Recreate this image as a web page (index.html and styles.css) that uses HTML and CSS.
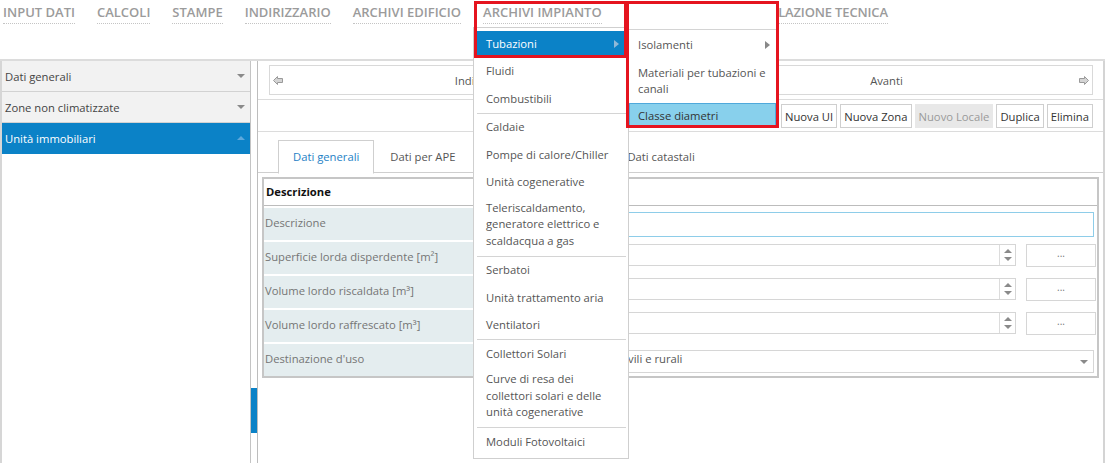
FILE: index.html
```html
<!DOCTYPE html>
<html lang="it">
<head>
<meta charset="utf-8">
<title>Unità immobiliari</title>
<link rel="stylesheet" href="styles.css">
</head>
<body>
<div class="app">
  <header class="topbar">
    <nav class="topnav">
      <a>INPUT DATI</a>
      <a>CALCOLI</a>
      <a>STAMPE</a>
      <a>INDIRIZZARIO</a>
      <a>ARCHIVI EDIFICIO</a>
      <a class="open">ARCHIVI IMPIANTO</a>
      <a>IMPOSTAZIONI</a>
      <a class="last">INSTALLAZIONE TECNICA</a>
    </nav>
  </header>

  <div class="main">
    <aside class="sidebar">
      <div class="side-item"><span>Dati generali</span><i class="caret down"></i></div>
      <div class="side-item"><span>Zone non climatizzate</span><i class="caret down"></i></div>
      <div class="side-item active"><span>Unità immobiliari</span><i class="caret up"></i></div>
    </aside>
    <div class="scrolltrack"><div class="thumb"></div></div>

    <section class="content">
      <div class="navrow">
        <div class="navbox">
          <div class="navbtn">
            <svg class="arrow" viewBox="0 0 10 9" width="10" height="9"><polygon points="0.5,4.5 4.5,0.5 4.5,2.5 9.5,2.5 9.5,6.5 4.5,6.5 4.5,8.5"/></svg>
            <span>Indietro</span>
            <i></i>
          </div>
          <div class="navbtn">
            <i></i>
            <span>Avanti</span>
            <svg class="arrow" viewBox="0 0 10 9" width="10" height="9"><polygon points="9.5,4.5 5.5,0.5 5.5,2.5 0.5,2.5 0.5,6.5 5.5,6.5 5.5,8.5"/></svg>
          </div>
        </div>
      </div>

      <div class="btnrow">
        <button class="btn">Nuova UI</button>
        <button class="btn">Nuova Zona</button>
        <button class="btn disabled">Nuovo Locale</button>
        <button class="btn">Duplica</button>
        <button class="btn">Elimina</button>
      </div>

      <div class="tabs">
        <div class="tab active">Dati generali</div>
        <div class="tab">Dati per APE</div>
        <div class="tab wide">Dati energetici</div>
        <div class="tab">Dati catastali</div>
      </div>

      <div class="formwrap">
        <div class="formtable">
          <div class="fhead">Descrizione</div>
          <div class="frow">
            <div class="flabel">Descrizione</div>
            <div class="fval"><div class="input focus"></div></div>
          </div>
          <div class="frow">
            <div class="flabel">Superficie lorda disperdente [m²]</div>
            <div class="fval spin"><div class="input num"><span></span><span class="spinbtn"><i class="tri up"></i><i class="tri down"></i></span></div><div class="dots">...</div></div>
          </div>
          <div class="frow">
            <div class="flabel">Volume lordo riscaldata [m³]</div>
            <div class="fval spin"><div class="input num"><span></span><span class="spinbtn"><i class="tri up"></i><i class="tri down"></i></span></div><div class="dots">...</div></div>
          </div>
          <div class="frow">
            <div class="flabel">Volume lordo raffrescato [m³]</div>
            <div class="fval spin"><div class="input num"><span></span><span class="spinbtn"><i class="tri up"></i><i class="tri down"></i></span></div><div class="dots">...</div></div>
          </div>
          <div class="frow">
            <div class="flabel">Destinazione d'uso</div>
            <div class="fval sel"><div class="input select"><span>E.1 (1) bis - abitazioni civili e rurali</span><i class="tri down"></i></div></div>
          </div>
        </div>
      </div>
    </section>
  </div>

  <div class="dropdown">
    <ul>
      <li class="hl"><span>Tubazioni</span><i class="tri right light"></i></li>
      <li>Fluidi</li>
      <li>Combustibili</li>
      <li class="sep"></li>
      <li>Caldaie</li>
      <li>Pompe di calore/Chiller</li>
      <li>Unità cogenerative</li>
      <li class="ml">Teleriscaldamento, generatore elettrico e scaldacqua a gas</li>
      <li class="sep"></li>
      <li>Serbatoi</li>
      <li>Unità trattamento aria</li>
      <li>Ventilatori</li>
      <li class="sep"></li>
      <li>Collettori Solari</li>
      <li class="ml">Curve di resa dei collettori solari e delle unità cogenerative</li>
      <li class="sep"></li>
      <li>Moduli Fotovoltaici</li>
    </ul>
  </div>

  <div class="redbox box1"></div>
  <div class="redbox box2">
    <ul class="submenu">
      <li><span>Isolamenti</span><i class="tri right"></i></li>
      <li>Materiali per tubazioni e canali</li>
      <li class="sel">Classe diametri</li>
    </ul>
  </div>
</div>
</body>
</html>
```

FILE: styles.css
```css
* { box-sizing: border-box; }
html, body { margin: 0; padding: 0; }
body {
  font-family: "Open Sans", "Noto Sans", sans-serif;
  font-size: 11.25px;
  color: #555;
  background: #fff;
  width: 1105px;
  height: 463px;
  overflow: hidden;
}
.app { position: relative; width: 1105px; height: 463px; }

/* top menu */
.topbar { height: 61px; border-bottom: 2px solid #dcdcdc; }
.topnav { display: flex; gap: 22px; padding: 4px 0 0 3px; }
.topnav a {
  font-size: 13px;
  font-weight: 600;
  color: #9b9b9b;
  border-bottom: 1px dotted #c4c4c4;
  padding-bottom: 2px;
  line-height: 17px;
  white-space: nowrap;
}
.topnav a.last { margin-left: -4px; letter-spacing: -0.15px; }

/* main */
.main { display: flex; height: 402px; }
.sidebar {
  width: 251px;
  border-left: 2px solid #d6d6d6;
  border-right: 1px solid #c4c4c4;
}
.side-item {
  height: 31px;
  background: #f2f2f2;
  border-bottom: 1px solid #d2d2d2;
  display: flex;
  align-items: center;
  justify-content: space-between;
  padding: 0 5px 0 3px;
  color: #444;
}
.side-item.active { background: #0b82c7; color: #fff; border-bottom-color: #0b82c7; }
.caret { width: 0; height: 0; border-left: 4px solid transparent; border-right: 4px solid transparent; }
.caret.down { border-top: 4px solid #8a8a8a; }
.caret.up { border-bottom: 4px solid #5ea8dc; }

.scrolltrack { width: 6px; }
.thumb { margin-top: 327px; height: 45px; background: #0b82c7; }

.content {
  flex: 1;
  border-left: 1px solid #bdbdbd;
  border-right: 2px solid #d4d4d4;
}

.navrow { padding: 4px 10px 4px 11px; border-bottom: 1px solid #dcdcdc; }
.navbox { display: flex; height: 30px; border: 1px solid #d9d9d9; }
.navbtn {
  flex: 1;
  display: grid;
  grid-template-columns: 16px 1fr 16px;
  align-items: center;
  padding: 0 3px;
  color: #555;
}
.navbtn span { text-align: center; }
.arrow { fill: #d4d4d4; stroke: #9a9a9a; stroke-width: 1; }
.navbtn:last-child .arrow { justify-self: end; }

.btnrow {
  display: flex;
  justify-content: flex-end;
  gap: 3px;
  padding: 4px 10px 0 0;
  height: 32px;
  border-bottom: 1px solid #dcdcdc;
}
.btn {
  font-family: inherit;
  font-size: 11.25px;
  color: #333;
  background: #fff;
  border: 1px solid #cfcfcf;
  height: 24px;
  padding: 0 3px;
  margin: 0;
}
.btn.disabled { background: #e8e8e8; color: #9a9a9a; border-color: #e8e8e8; }

.tabs {
  display: flex;
  padding: 8px 0 0 20px;
  border-bottom: 1px solid #cfcfcf;
  height: 41px;
}
.tab {
  height: 33px;
  line-height: 31px;
  padding: 0 15px;
  color: #555;
  border: 1px solid transparent;
  white-space: nowrap;
}
.tab.wide { width: 140px; }
.tab.active {
  padding: 0 14px;
  color: #1e7fc5;
  border-color: #cfcfcf;
  border-bottom-color: #fff;
  background: #fff;
  margin-bottom: -1px;
  height: 34px;
}

.formwrap { padding: 4px 4px 0 4px; }
.formtable { border: 2px solid #c6c6c6; }
.fhead {
  height: 27px;
  line-height: 26px;
  border-bottom: 1px solid #bcbcbc;
  font-weight: 700;
  color: #111;
  padding-left: 2px;
}
.frow {
  display: grid;
  grid-template-columns: 222px 1fr;
  height: 32px;
  margin-top: 2px;
}
.frow:first-of-type { margin-top: 1px; }
.flabel {
  background: #e4edef;
  color: #757575;
  line-height: 29px;
  padding-left: 1px;
  white-space: nowrap;
}
.fval { padding: 4px 3px 0 4px; background: #fff; }
.fval.spin { display: flex; padding-top: 2px; padding-right: 1px; }
.fval.sel { padding-top: 6px; }
.input { height: 25px; border: 1px solid #d6d6d6; background: #fff; }
.input.focus { border-color: #8ecde9; }
.input.num {
  flex: 1;
  height: 22px;
  display: flex;
  justify-content: space-between;
  margin-right: 10px;
}
.spinbtn {
  width: 16px;
  border-left: 1px solid #dcdcdc;
  display: flex;
  flex-direction: column;
  align-items: center;
  justify-content: center;
  gap: 4px;
}
.dots {
  width: 70px;
  height: 23px;
  border: 1px solid #d6d6d6;
  text-align: center;
  line-height: 17px;
  font-size: 10px;
  color: #777;
}
.input.select {
  height: 23px;
  display: flex;
  align-items: center;
  justify-content: space-between;
  padding: 0 5px 0 16px;
  color: #555;
  line-height: 17px;
}
.input.select span { margin-top: -7px; }

.tri { display: block; width: 0; height: 0; }
.tri.up { border-left: 4px solid transparent; border-right: 4px solid transparent; border-bottom: 4px solid #8a8a8a; }
.tri.down { border-left: 4px solid transparent; border-right: 4px solid transparent; border-top: 4px solid #8a8a8a; }
.tri.right { border-top: 4px solid transparent; border-bottom: 4px solid transparent; border-left: 5px solid #888; }
.tri.right.light { border-left-color: #8fb8d8; }

/* dropdown menu */
.dropdown {
  position: absolute;
  left: 473px;
  top: 27px;
  width: 156px;
  height: 432px;
  background: #fff;
  border: 1px solid #cfcfcf;
}
.dropdown ul, .submenu { list-style: none; margin: 0; padding: 3px 2px 0 0; }
.dropdown li {
  padding: 5.5px 8px 5.5px 12px;
  line-height: 16.5px;
  color: #555;
}
.dropdown li.ml { padding-top: 3.5px; padding-bottom: 6.5px; }
.dropdown li.hl {
  background: #0b82c7;
  color: #fff;
  display: flex;
  justify-content: space-between;
  align-items: center;
  padding-top: 5px;
  padding-bottom: 5px;
  padding-right: 7px;
}
.dropdown li.sep { padding: 0; height: 1px; margin: 0 0 0 3px; background: #d4d4d4; }

/* annotation boxes */
.redbox { position: absolute; border: 3px solid #e5141f; }
.box1 { left: 474px; top: 1px; width: 153px; height: 57px; }
.box2 { left: 626px; top: 1px; width: 153px; height: 127px; background: #fff; overflow: hidden; }
.submenu {
  margin-top: 25px;
  border-top: 1px solid #d4d4d4;
  padding: 1px 0 0 0;
}
.submenu li {
  padding: 6px 6px 6px 9px;
  line-height: 16px;
  color: #555;
}
.submenu li:first-child {
  display: flex;
  justify-content: space-between;
  align-items: center;
}
.submenu li.sel {
  background: #88d0ec;
  border: 1px solid #4fa9db;
  color: #333;
  padding: 4px 6px 6px 8px;
}
```
